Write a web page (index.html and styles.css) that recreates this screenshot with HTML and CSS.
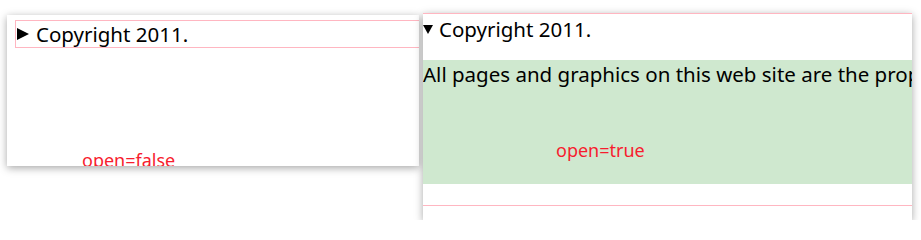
FILE: index.html
```html
<!DOCTYPE html>
<html lang="en">
<head>
  <meta charset="UTF-8" />
  <title>details open</title>
  <link rel="stylesheet" href="styles.css">
</head>
<body>
  <div class="shots">
    <!-- open=false -->
    <div class="shot closed">
      <div class="summary boxed">
        <svg class="marker" width="12" height="12" viewBox="0 0 12 12"><polygon points="0,0 12,6 0,12" fill="#000"/></svg>
        <span>Copyright 2011.</span>
      </div>
      <div class="label">open=false</div>
    </div>

    <!-- open=true -->
    <div class="shot opened">
      <div class="details">
        <div class="summary">
          <svg class="marker" width="10" height="9" viewBox="0 0 10 9"><polygon points="0,0 10,0 5,9" fill="#000"/></svg>
          <span>Copyright 2011.</span>
        </div>
        <div class="content">
          <p>All pages and graphics on this web site are the property of W3C and are protected by copyright.</p>
          <div class="label">open=true</div>
        </div>
      </div>
    </div>
  </div>
</body>
</html>
```

FILE: styles.css
```css
body {
  margin: 0;
  background-color: #fff;
  font-family: "Noto Sans", "Open Sans", sans-serif;
  color: #000;
}

.shots {
  display: flex;
  align-items: flex-start;
  gap: 4px;
  padding-left: 7px;
}

.shot {
  background-color: #fff;
  overflow: hidden;
  box-shadow: 0 2px 8px rgba(0, 0, 0, 0.35);
}

.closed {
  margin-top: 15px;
  width: 412px;
  height: 151px;
}

.opened {
  margin-top: 13px;
  width: 489px;
  height: 207px;
}

.summary {
  display: flex;
  align-items: center;
  gap: 7px;
  font-size: 20.5px;
  line-height: 26px;
  white-space: nowrap;
}

.boxed {
  margin: 5px 0 0 8px;
  width: 420px;
  border: 1px solid #ffb6c1;
  padding-left: 1px;
}

.label {
  color: #f71c2e;
  font-size: 18px;
  line-height: 20px;
  white-space: nowrap;
}

.closed .label {
  margin-top: 102px;
  padding-left: 75px;
}

.details {
  border-top: 1px solid #ffb6c1;
  border-bottom: 1px solid #ffb6c1;
  height: 191px;
}

.opened .summary {
  gap: 6px;
  padding-top: 2px;
}

.content {
  margin-top: 18px;
  height: 124px;
  background-color: #cfe8cf;
}

.content p {
  margin: 0;
  font-size: 20.5px;
  line-height: 28px;
  white-space: nowrap;
}

.opened .label {
  margin-top: 52px;
  padding-left: 133px;
}
```
